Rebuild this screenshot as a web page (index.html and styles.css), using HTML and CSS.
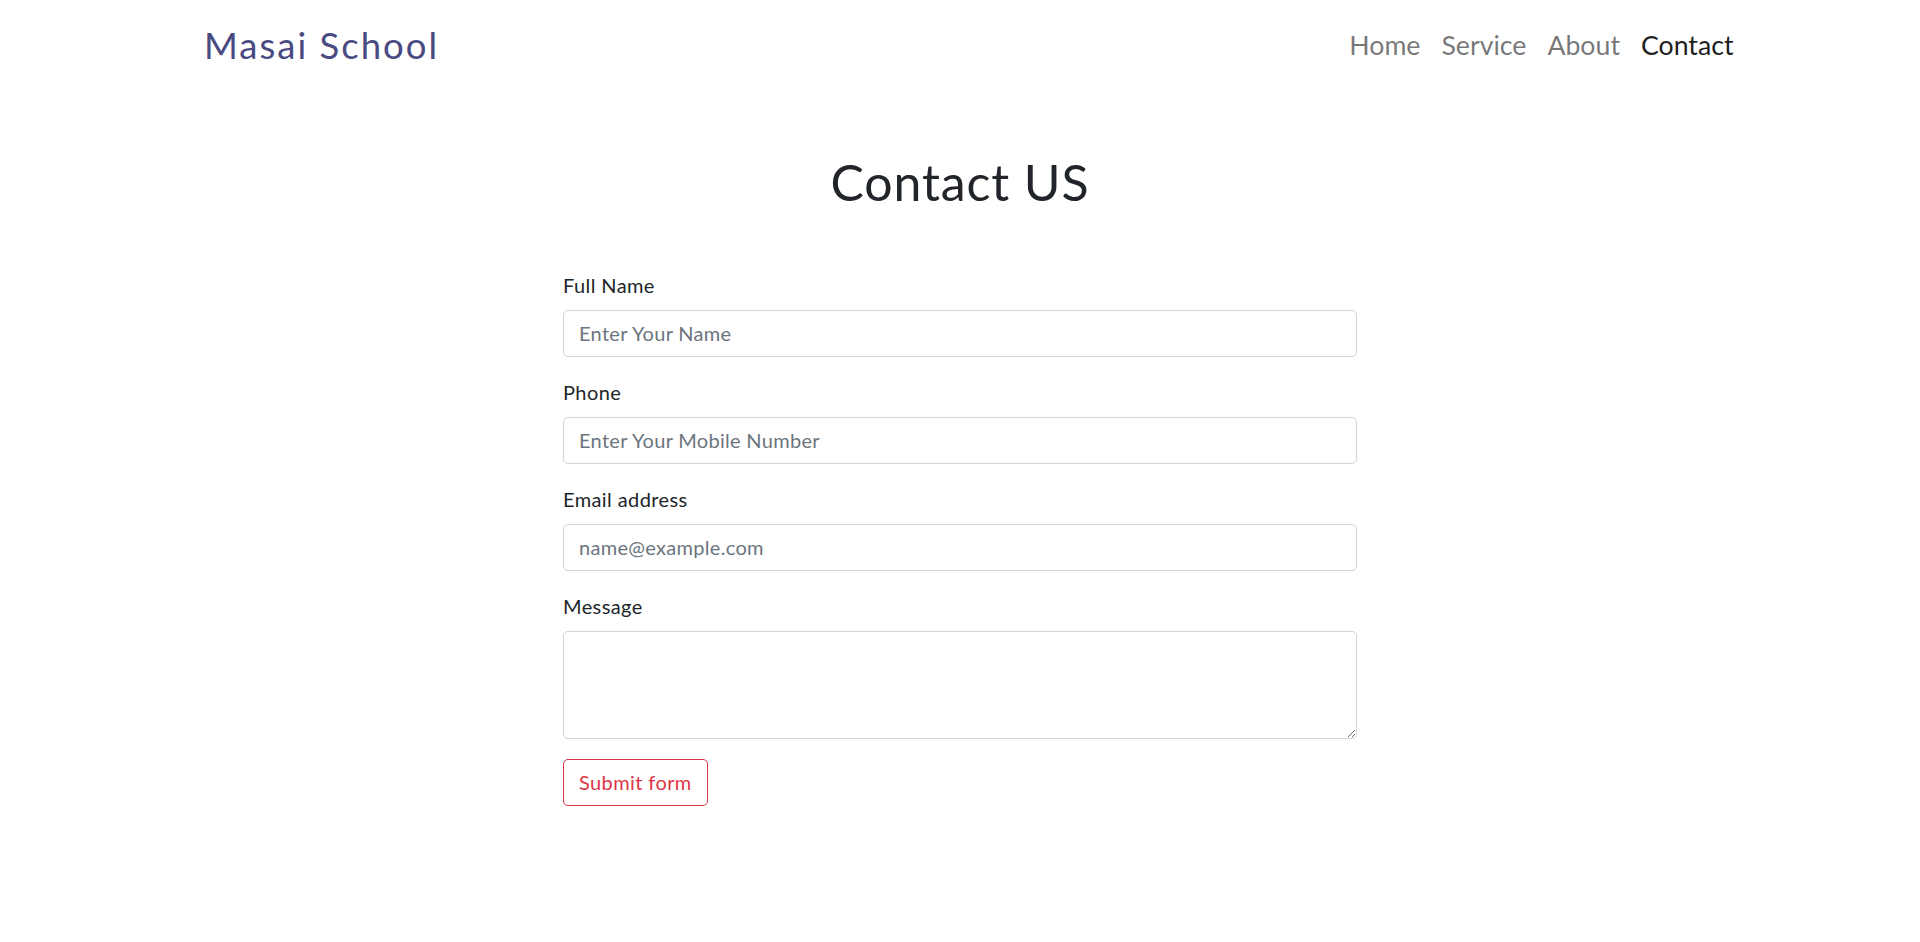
FILE: index.html
```html
<!DOCTYPE html>
<html lang="en">
<head>
<meta charset="utf-8">
<title>Contact - Masai School</title>
<link rel="stylesheet" href="styles.css">
</head>
<body>
<header class="navbar">
  <a class="brand" href="#">Masai School</a>
  <nav class="nav-links">
    <a class="nav-link" href="#">Home</a>
    <a class="nav-link" href="#">Service</a>
    <a class="nav-link" href="#">About</a>
    <a class="nav-link active" href="#">Contact</a>
  </nav>
</header>
<main class="content">
  <h1 class="title">Contact US</h1>
  <form class="contact-form">
    <div class="field">
      <label class="form-label" for="name">Full Name</label>
      <input class="form-control" id="name" type="text" placeholder="Enter Your Name">
    </div>
    <div class="field">
      <label class="form-label" for="phone">Phone</label>
      <input class="form-control" id="phone" type="text" placeholder="Enter Your Mobile Number">
    </div>
    <div class="field">
      <label class="form-label" for="email">Email address</label>
      <input class="form-control" id="email" type="email" placeholder="name@example.com">
    </div>
    <div class="field">
      <label class="form-label" for="msg">Message</label>
      <textarea class="form-control textarea" id="msg" rows="3"></textarea>
    </div>
    <button class="btn-submit" type="button">Submit form</button>
  </form>
</main>
</body>
</html>
```

FILE: styles.css
```css
* { box-sizing: border-box; }
html, body { margin: 0; padding: 0; background: #fff; }
body {
  font-family: Lato, "Open Sans", sans-serif;
  font-size: 20px;
  line-height: 1.5;
  letter-spacing: 0.02em;
  color: #212529;
}
a { text-decoration: none; }

.navbar {
  display: flex;
  justify-content: space-between;
  align-items: center;
  padding: 18px 176px 10px 204px;
}
.brand {
  font-size: 36.5px;
  line-height: 1.5;
  letter-spacing: 0.055em;
  color: #4a4a82;
}
.nav-links { display: flex; }
.nav-link {
  font-size: 26.7px;
  line-height: 1.5;
  letter-spacing: 0;
  padding: 0 10.5px;
  color: rgba(0, 0, 0, 0.55);
}
.nav-link.active { color: rgba(0, 0, 0, 0.9); }

.content { padding-top: 69px; }
.title {
  margin: 0;
  text-align: center;
  font-size: 50px;
  font-weight: 400;
  line-height: 1.2;
  letter-spacing: 0.018em;
  color: #212529;
}
.contact-form {
  width: 794px;
  margin: 58px auto 0;
}
.field { margin-bottom: 20px; }
.form-label {
  display: block;
  margin-bottom: 10px;
}
.form-control {
  display: block;
  width: 100%;
  font-family: inherit;
  font-size: 20px;
  line-height: 1.5;
  letter-spacing: 0.015em;
  padding: 7.5px 15px;
  color: #212529;
  background: #fff;
  border: 1px solid #ced4da;
  border-radius: 5px;
  outline: none;
}
.form-control::placeholder { color: #6c757d; opacity: 1; }
.textarea { height: 108px; resize: vertical; }
.btn-submit {
  font-family: inherit;
  font-size: 20px;
  line-height: 1.5;
  letter-spacing: 0.02em;
  padding: 7.5px 15px;
  color: #dc3545;
  background: transparent;
  border: 1px solid #dc3545;
  border-radius: 5px;
  cursor: pointer;
}
```
